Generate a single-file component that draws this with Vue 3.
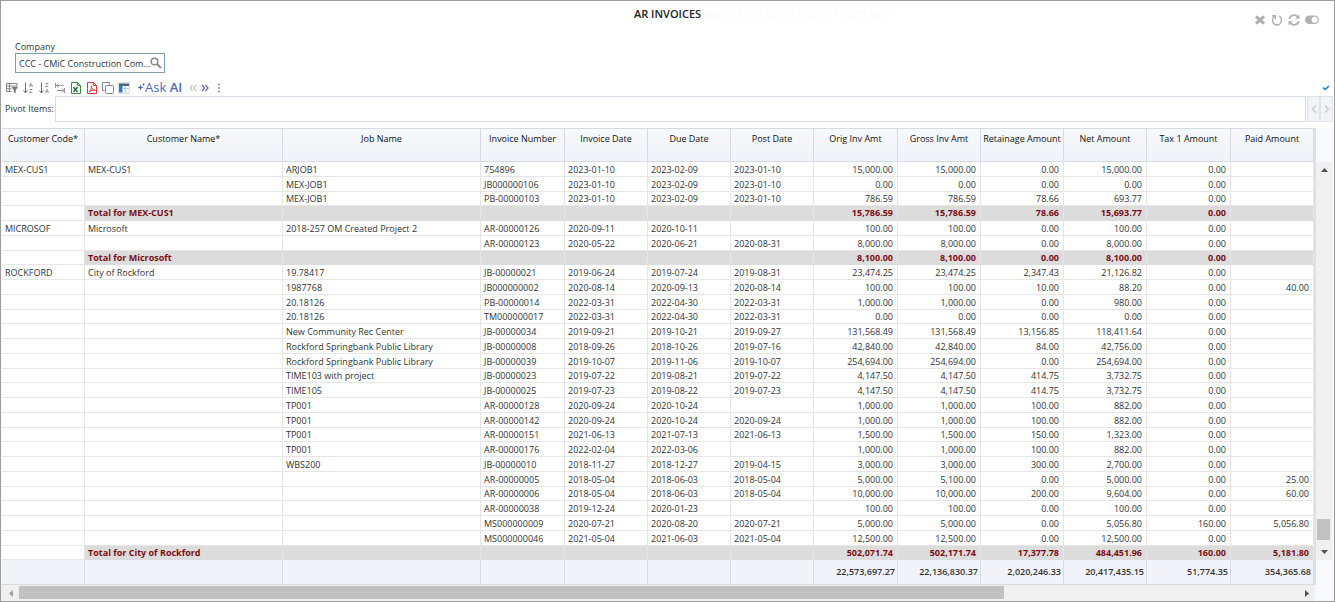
<script setup>
import { ref } from 'vue'

const company = ref('CCC - CMiC Construction Com...')
const pivot = ref('')

const columns = [
  ['Customer Code*', 83], ['Customer Name*', 198], ['Job Name', 198],
  ['Invoice Number', 84], ['Invoice Date', 83], ['Due Date', 83], ['Post Date', 83],
  ['Orig Inv Amt', 84], ['Gross Inv Amt', 83], ['Retainage Amount', 83],
  ['Net Amount', 83], ['Tax 1 Amount', 84], ['Paid Amount', 83]
]

const rows = `MEX-CUS1|MEX-CUS1|ARJOB1|754896|2023-01-10|2023-02-09|2023-01-10|15,000.00|15,000.00|0.00|15,000.00|0.00|
||MEX-JOB1|JB000000106|2023-01-10|2023-02-09|2023-01-10|0.00|0.00|0.00|0.00|0.00|
||MEX-JOB1|PB-00000103|2023-01-10|2023-02-09|2023-01-10|786.59|786.59|78.66|693.77|0.00|
|Total for MEX-CUS1||||||15,786.59|15,786.59|78.66|15,693.77|0.00|
MICROSOF|Microsoft|2018-257 OM Created Project 2|AR-00000126|2020-09-11|2020-10-11||100.00|100.00|0.00|100.00|0.00|
|||AR-00000123|2020-05-22|2020-06-21|2020-08-31|8,000.00|8,000.00|0.00|8,000.00|0.00|
|Total for Microsoft||||||8,100.00|8,100.00|0.00|8,100.00|0.00|
ROCKFORD|City of Rockford|19.78417|JB-00000021|2019-06-24|2019-07-24|2019-08-31|23,474.25|23,474.25|2,347.43|21,126.82|0.00|
||1987768|JB000000002|2020-08-14|2020-09-13|2020-08-14|100.00|100.00|10.00|88.20|0.00|40.00
||20.18126|PB-00000014|2022-03-31|2022-04-30|2022-03-31|1,000.00|1,000.00|0.00|980.00|0.00|
||20.18126|TM000000017|2022-03-31|2022-04-30|2022-03-31|0.00|0.00|0.00|0.00|0.00|
||New Community Rec Center|JB-00000034|2019-09-21|2019-10-21|2019-09-27|131,568.49|131,568.49|13,156.85|118,411.64|0.00|
||Rockford Springbank Public Library|JB-00000008|2018-09-26|2018-10-26|2019-07-16|42,840.00|42,840.00|84.00|42,756.00|0.00|
||Rockford Springbank Public Library|JB-00000039|2019-10-07|2019-11-06|2019-10-07|254,694.00|254,694.00|0.00|254,694.00|0.00|
||TIME103 with project|JB-00000023|2019-07-22|2019-08-21|2019-07-22|4,147.50|4,147.50|414.75|3,732.75|0.00|
||TIME105|JB-00000025|2019-07-23|2019-08-22|2019-07-23|4,147.50|4,147.50|414.75|3,732.75|0.00|
||TP001|AR-00000128|2020-09-24|2020-10-24||1,000.00|1,000.00|100.00|882.00|0.00|
||TP001|AR-00000142|2020-09-24|2020-10-24|2020-09-24|1,000.00|1,000.00|100.00|882.00|0.00|
||TP001|AR-00000151|2021-06-13|2021-07-13|2021-06-13|1,500.00|1,500.00|150.00|1,323.00|0.00|
||TP001|AR-00000176|2022-02-04|2022-03-06||1,000.00|1,000.00|100.00|882.00|0.00|
||WBS200|JB-00000010|2018-11-27|2018-12-27|2019-04-15|3,000.00|3,000.00|300.00|2,700.00|0.00|
|||AR-00000005|2018-05-04|2018-06-03|2018-05-04|5,000.00|5,100.00|0.00|5,000.00|0.00|25.00
|||AR-00000006|2018-05-04|2018-06-03|2018-05-04|10,000.00|10,000.00|200.00|9,604.00|0.00|60.00
|||AR-00000038|2019-12-24|2020-01-23||100.00|100.00|0.00|100.00|0.00|
|||MS000000009|2020-07-21|2020-08-20|2020-07-21|5,000.00|5,000.00|0.00|5,056.80|160.00|5,056.80
|||MS000000046|2021-05-04|2021-06-03|2021-05-04|12,500.00|12,500.00|0.00|12,500.00|0.00|
|Total for City of Rockford||||||502,071.74|502,171.74|17,377.78|484,451.96|160.00|5,181.80`
  .split('\n').map(line => line.split('|'))

const grand = ['', '', '', '', '', '', '', '22,573,697.27', '22,136,830.37', '2,020,246.33', '20,417,435.15', '51,774.35', '354,365.68']
</script>

<template>
  <main class="panel">
    <header class="top">
      <h1>AR INVOICES<span class="build">(MISTYR12;2.93;1.0.126375;172.29.38.5)</span></h1>
      <div class="window-tools">
        <button aria-label="Close">
          <svg width="12" height="12" viewBox="0 0 12 12"><path d="M2 2.3l8 7.4M10 2.3L2 9.7" stroke="#b0b0b0" stroke-width="3.2" /></svg>
        </button>
        <button aria-label="Reset">
          <svg width="12" height="12" viewBox="0 0 12 12"><path d="M1 1.700h3.300v3.200M4 2C.8 4 .8 8 3 9.900c2 1.500 4.600 1.200 6.200-.5C11.200 7 10.700 3.500 8 1.900" fill="none" stroke="#b0b0b0" stroke-width="1.400" /></svg>
        </button>
        <button aria-label="Refresh">
          <svg width="12" height="12" viewBox="0 0 12 12"><path d="M1.300 5C2 .9 7.500 0 9.800 3M10.700 7C10 11.100 4.500 12 2.200 9" fill="none" stroke="#b0b0b0" stroke-width="1.700" /><path d="M11.400.6v4.200H7.200zM.6 11.400V7.200h4.200z" fill="#b0b0b0" /></svg>
        </button>
        <button aria-label="Toggle">
          <svg width="14" height="12" viewBox="0 0 14 12"><rect x="0" y="1.500" width="14" height="8.500" rx="4.250" fill="#b0b0b0" /><circle cx="9.700" cy="5.750" r="3.100" fill="#fff" /></svg>
        </button>
      </div>
    </header>

    <section class="company">
      <label for="company">Company</label>
      <div class="lookup">
        <input id="company" v-model="company" type="text">
        <button aria-label="Search company">
          <svg width="12" height="12" viewBox="0 0 12 12"><circle cx="4.500" cy="4.500" r="3.300" fill="none" stroke="#858a8f" stroke-width="1.500" /><path d="M7 7l4 4" stroke="#858a8f" stroke-width="2" /></svg>
        </button>
      </div>
    </section>

    <nav class="toolbar">
      <button aria-label="Filter">
        <svg width="12" height="12" viewBox="0 0 12 12"><path d="M.5 9.500v-8h10.500v3M.5 4h10.500M.5 6.700h5M3.500 1.500v8M.5 9.500h5" fill="none" stroke="#858585" /><path d="M5.500 5h6.500L9.700 8v3.500L7.800 10V8z" fill="#777" /></svg>
      </button>
      <button v-for="dir in ['AZ', 'ZA']" :key="dir" :aria-label="'Sort ' + dir">
        <svg width="12" height="16" viewBox="0 0 12 16"><path d="M3.500 2.500v10M1.500 10.500l2 2.500 2-2.500" fill="none" stroke="#687078" /><text x="7" y="7" class="sort">{{ dir[0] }}</text><text x="7" y="13" class="sort">{{ dir[1] }}</text></svg>
      </button>
      <button aria-label="Fit columns">
        <svg width="12" height="12" viewBox="0 0 12 12"><path d="M1.500 1v5M2 3.500h8M4.500 1.500l-2 2 2 2M10.500 6v5M3 8.500h7M8 6.500l2 2-2 2" fill="none" stroke="#9499a0" /></svg>
      </button>
      <button aria-label="Export to Excel">
        <svg width="12" height="12" viewBox="0 0 12 12"><path d="M1.500.5h6l3 3v8h-9z" fill="#fff" stroke="#3c8d4c" /><path d="M7.500.5v3h3" fill="none" stroke="#3c8d4c" /><path d="M3.500 5l4 5M7.500 5l-4 5" stroke="#22773a" stroke-width="1.500" /></svg>
      </button>
      <button aria-label="Export to PDF">
        <svg width="12" height="12" viewBox="0 0 12 12"><path d="M1.500.5h6l3 3v8h-9z" fill="#fff" stroke="#d9383c" /><path d="M7.500.5v3h3M3 10c2-1.500 2.600-4 2.300-6 .4 2.300 1.700 4 4 4.300C7 7.800 4.500 8.500 3 10z" fill="none" stroke="#d9383c" /></svg>
      </button>
      <button aria-label="Copy">
        <svg width="12" height="12" viewBox="0 0 12 12"><path d="M2.500 8.500h-2v-8h7v2" fill="none" stroke="#85809a" /><rect x="3.500" y="3.500" width="8" height="8" rx="1" fill="#fff" stroke="#85809a" /></svg>
      </button>
      <button aria-label="Freeze columns" class="pressed">
        <svg width="12" height="12" viewBox="0 0 12 12"><path d="M1 1.500h10v9H1z" fill="#fff" /><path d="M1 1.500h10V4H1z" fill="#46657d" /><path d="M1 4h3.500v6.500H1z" fill="#2683c2" /><path d="M5 6.500h6M7.500 4v6.500" stroke="#b9cad6" /></svg>
      </button>
      <button class="ask">
        <svg width="8" height="9" viewBox="0 0 8 9"><path d="M3.500 1.500l.8 2.200 2.200.8-2.200.8-.8 2.200-.8-2.200-2.200-.8 2.200-.8z" fill="#4660b8" /><circle cx="6.500" cy="1.500" r="1" fill="#4660b8" /></svg>
        <span>Ask <b>AI</b></span>
      </button>
      <button aria-label="Previous">
        <svg width="8" height="12" viewBox="0 0 8 12"><path d="M3.500 3l-2.500 3 2.500 3M7 3L4.500 6 7 9" fill="none" stroke="#a5abb3" /></svg>
      </button>
      <button aria-label="Next">
        <svg width="8" height="12" viewBox="0 0 8 12"><path d="M1 3l2.500 3L1 9M4.500 3L7 6 4.500 9" fill="none" stroke="#5b6fa0" stroke-width="1.200" /></svg>
      </button>
      <button aria-label="More">
        <svg width="12" height="12" viewBox="0 0 12 12"><path d="M5 1.500h2v2H5zM5 5h2v2H5zM5 8.500h2v2H5z" fill="#a0a0a0" /></svg>
      </button>
      <svg class="check" width="8" height="6" viewBox="0 0 8 6"><path d="M1 2.500l2.200 2L7 1" fill="none" stroke="#1c7fd6" stroke-width="1.600" /></svg>
    </nav>

    <section class="pivot">
      <label for="pivot">Pivot Items:</label>
      <input id="pivot" v-model="pivot" type="text">
      <div class="pager">
        <button aria-label="Scroll left"><svg width="6" height="10" viewBox="0 0 6 10"><path d="M5 1.500L1.500 5 5 8.500" fill="none" stroke="#c9ccd1" stroke-width="1.500" /></svg></button>
        <button aria-label="Scroll right"><svg width="6" height="10" viewBox="0 0 6 10"><path d="M1 1.500L4.500 5 1 8.500" fill="none" stroke="#c9ccd1" stroke-width="1.500" /></svg></button>
      </div>
    </section>

    <section class="grid">
      <table>
        <colgroup><col v-for="c in columns" :key="c[0]" :style="{ width: c[1] + 'px' }"></colgroup>
        <thead>
          <tr><th v-for="c in columns" :key="c[0]" scope="col">{{ c[0] }}</th></tr>
        </thead>
        <tbody>
          <tr v-for="(row, i) in rows" :key="i" :class="{ total: row[1].startsWith('Total') }">
            <td v-for="(cell, j) in row" :key="j" :class="{ num: j > 6 }">{{ cell }}</td>
          </tr>
        </tbody>
        <tfoot>
          <tr><td v-for="(cell, j) in grand" :key="j" class="num">{{ cell }}</td></tr>
        </tfoot>
      </table>
      <div class="vscroll">
        <button aria-label="Scroll up"><svg width="7" height="4" viewBox="0 0 7 4"><path d="M0 4l3.500-4L7 4z" fill="#505050" /></svg></button>
        <div class="vthumb"></div>
        <button aria-label="Scroll down"><svg width="7" height="4" viewBox="0 0 7 4"><path d="M0 0l3.500 4L7 0z" fill="#505050" /></svg></button>
      </div>
    </section>

    <div class="hscroll">
      <button aria-label="Scroll table left"><svg width="4" height="7" viewBox="0 0 4 7"><path d="M4 0L0 3.500 4 7z" fill="#a0a0a0" /></svg></button>
      <div class="htrack"><div class="hthumb"></div></div>
      <button aria-label="Scroll table right"><svg width="4" height="7" viewBox="0 0 4 7"><path d="M0 0l4 3.500L0 7z" fill="#505050" /></svg></button>
      <div class="corner"></div>
    </div>
  </main>
</template>

<style>
body { background: #fff; }
</style>

<style scoped>
* { box-sizing: border-box; }
.panel {
  border: 1px solid #9d9d9d;
  background: #fff;
  color: #333;
  font: 9px/13px "Open Sans", "Noto Sans", sans-serif;
}
button { padding: 0; border: 0; background: none; font: inherit; color: inherit; display: flex; align-items: center; justify-content: center; }
svg { display: block; }
.top { position: relative; height: 40px; padding-top: 6px; }
h1 { position: relative; width: max-content; margin: 0 auto; font-size: 11px; line-height: 14px; font-weight: 600; color: #222; white-space: nowrap; }
.build { position: absolute; left: 100%; top: 0; padding-left: 3px; font-size: 10px; color: #fbfbfb; }
.window-tools { position: absolute; top: 13px; right: 15px; display: flex; gap: 5px; }
.company { padding-left: 14px; }
.company label { display: block; line-height: 12px; color: #333; }
.lookup { width: 150px; height: 20px; display: flex; align-items: center; border: 1px solid #7f9fb0; padding-right: 2px; }
.lookup input { flex: 1; min-width: 0; border: 0; padding: 0 0 0 3px; font: inherit; color: #333; outline: 0; }
.toolbar { display: flex; align-items: center; gap: 4px; height: 23px; padding: 7px 4px 1px 5px; }
.sort { font: 6px "Open Sans", sans-serif; fill: #555; }
.pressed { background: #e3e3e3; }
.ask { color: #4f69b8; font-size: 13px; line-height: 15px; margin: 0 3px; }
.ask b { font-weight: 600; }
.check { margin-left: auto; }
.pivot { display: flex; align-items: center; height: 26px; padding: 0 1px 0 4px; }
.pivot label { width: 50px; padding-bottom: 2px; }
.pivot input { flex: 1; height: 26px; border: 1px solid #d3dce4; outline: 0; }
.pager { display: flex; margin-left: 1px; }
.pager button { width: 13px; height: 26px; border: 1px solid #dfe4ec; background: #f3f4f8; }
.grid { display: grid; grid-template-columns: 1fr 20px; margin-top: 6px; padding-left: 1px; background: #f8f9fd; }
table { width: 100%; table-layout: fixed; border-collapse: separate; border-spacing: 0; border-right: 2px solid #dbe1e6; }
th { height: 34px; padding: 3px 0 0; vertical-align: top; font-weight: 500; color: #111; white-space: nowrap; border: solid #d3dce3; border-width: 1px 1px 1px 0; background: linear-gradient(#f8f9fc, #f1f2f7); }
td { height: 15px; padding: 0 4px 0 3px; line-height: 12px; vertical-align: bottom; white-space: nowrap; background: #fff; border: solid #e6e6e6; border-width: 0 1px 1px 0; }
tbody tr:nth-child(4n+3) td { height: 14px; }
.num { text-align: right; }
.total td { color: #7b0d12; font-weight: 700; vertical-align: middle; }
.total td:not(:first-child) { background: #dcdcdc; border-bottom-color: #dcdcdc; }
tfoot td { height: 25px; padding: 0 2px; font-weight: 600; vertical-align: middle; background: #f2f3f8; border-color: #d3dce3; }
.vscroll { display: flex; flex-direction: column; margin: 34px 4px 25px 0; background: #f0f0f0; }
.vscroll button { height: 16px; }
.vthumb { height: 21px; margin: auto 2px 4px 1px; background: #c1c1c1; }
.hscroll { display: flex; height: 16px; padding-left: 1px; background: #f0f0f0; }
.hscroll button { width: 17px; }
.htrack { flex: 1; padding: 1px 0; }
.hthumb { width: 77%; height: 13px; background: #c1c1c1; }
.corner { width: 19px; background: #f8f9fd; }
</style>
